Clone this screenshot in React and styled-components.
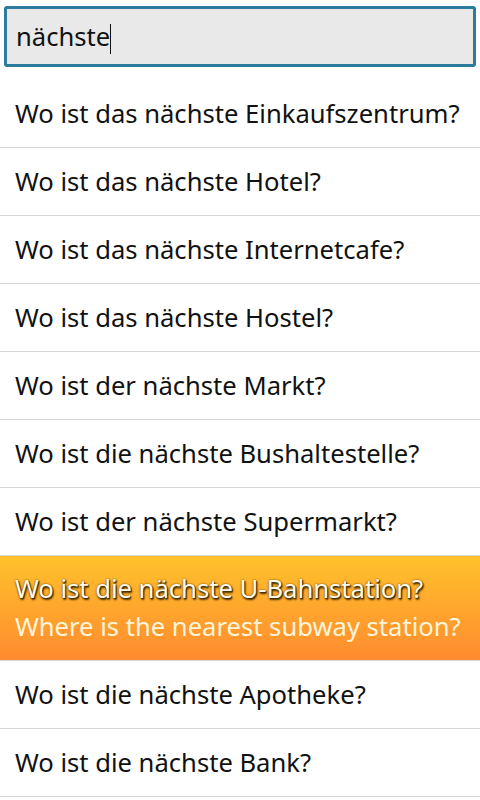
import React from "react";
import styled, { createGlobalStyle } from "styled-components";

const GlobalStyle = createGlobalStyle`
  html, body {
    margin: 0;
    padding: 0;
    background: #ffffff;
  }
  body {
    font-family: "Noto Sans", "Open Sans", sans-serif;
  }
`;

const phrases = [
  { de: "Wo ist das nächste Einkaufszentrum?" },
  { de: "Wo ist das nächste Hotel?" },
  { de: "Wo ist das nächste Internetcafe?" },
  { de: "Wo ist das nächste Hostel?" },
  { de: "Wo ist der nächste Markt?" },
  { de: "Wo ist die nächste Bushaltestelle?" },
  { de: "Wo ist der nächste Supermarkt?" },
  {
    de: "Wo ist die nächste U-Bahnstation?",
    en: "Where is the nearest subway station?",
    active: true,
  },
  { de: "Wo ist die nächste Apotheke?" },
  { de: "Wo ist die nächste Bank?" },
];

const App = () => {
  return (
    <>
      <GlobalStyle />
      <Screen>
        <SearchBar>
          <SearchBox>
            <span>nächste</span>
            <Caret />
          </SearchBox>
        </SearchBar>
        <PhraseList>
          {phrases.map((p) => (
            <Phrase key={p.de} $active={p.active}>
              <German $active={p.active}>{p.de}</German>
              {p.en && <English>{p.en}</English>}
            </Phrase>
          ))}
        </PhraseList>
      </Screen>
    </>
  );
};

const Screen = styled.div`
  width: 480px;
  height: 800px;
  overflow: hidden;
  background: #ffffff;
`;

const SearchBar = styled.div`
  height: 80px;
  box-sizing: border-box;
  padding: 6px 4px 0 4px;
`;

const SearchBox = styled.div`
  height: 61px;
  box-sizing: border-box;
  border: 3px solid #2a7b9c;
  border-radius: 3px;
  background: #e9e9e9;
  display: flex;
  align-items: center;
  padding-left: 9px;
  font-size: 25.6px;
  color: #111;
  span {
    line-height: 1;
  }
`;

const Caret = styled.i`
  display: inline-block;
  width: 1px;
  height: 30px;
  background: #111;
  margin-top: 4px;
`;

const PhraseList = styled.ul`
  list-style: none;
  margin: 0;
  padding: 0;
`;

const Phrase = styled.li`
  height: ${(p) => (p.$active ? "104px" : "67px")};
  border-bottom: 1px solid #d6d6d6;
  display: flex;
  flex-direction: column;
  justify-content: center;
  padding: 0 15px;
  background: ${(p) =>
    p.$active ? "linear-gradient(#ffc22b, #ff8b2f)" : "transparent"};
`;

const German = styled.div`
  font-size: 25.6px;
  line-height: 38px;
  color: ${(p) => (p.$active ? "#fffbea" : "#111111")};
  text-shadow: ${(p) =>
    p.$active
      ? "1px 2px 2px #4a3000, 0 0 2px #5e3e00, 1px 1px 1px #3a2600"
      : "none"};
  white-space: nowrap;
`;

const English = styled.div`
  font-size: 25.6px;
  line-height: 38px;
  color: #fff5da;
  white-space: nowrap;
`;

export default App;
